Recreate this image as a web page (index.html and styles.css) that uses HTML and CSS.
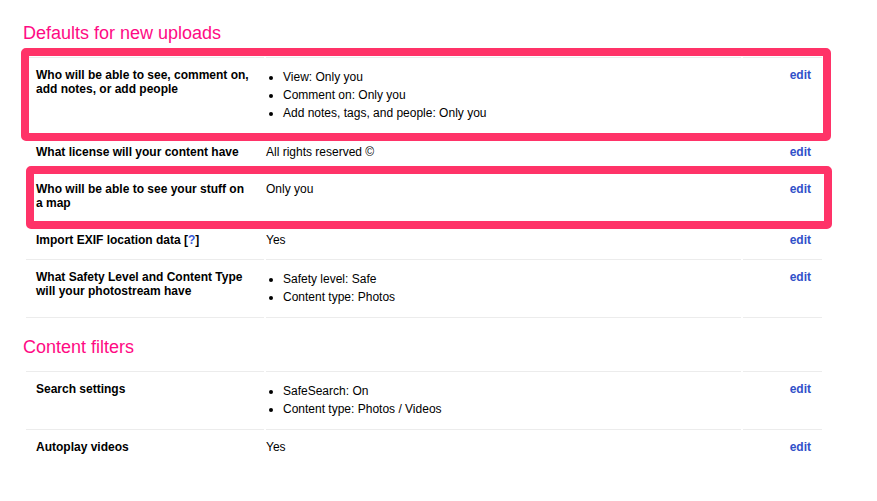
FILE: index.html
```html
<!DOCTYPE html>
<html>
<head>
<meta charset="utf-8">
<link rel="stylesheet" href="styles.css">
</head>
<body>
<div class="page">
  <section class="section first">
    <h2 class="heading">Defaults for new uploads</h2>
    <div class="grid">
      <div class="cell label tall">Who will be able to see, comment on, add notes, or add people</div>
      <div class="cell value tall"><ul class="list"><li>View: Only you</li><li>Comment on: Only you</li><li>Add notes, tags, and people: Only you</li></ul></div>
      <div class="cell action tall"><a class="edit">edit</a></div>

      <div class="cell label">What license will your content have</div>
      <div class="cell value">All rights reserved ©</div>
      <div class="cell action"><a class="edit">edit</a></div>

      <div class="cell label">Who will be able to see your stuff on a map</div>
      <div class="cell value">Only you</div>
      <div class="cell action"><a class="edit">edit</a></div>

      <div class="cell label">Import EXIF location data [<a class="help">?</a>]</div>
      <div class="cell value">Yes</div>
      <div class="cell action"><a class="edit">edit</a></div>

      <div class="cell label last">What Safety Level and Content Type will your photostream have</div>
      <div class="cell value last"><ul class="list"><li>Safety level: Safe</li><li>Content type: Photos</li></ul></div>
      <div class="cell action last"><a class="edit">edit</a></div>
    </div>
    <div class="highlight hl-one"></div>
    <div class="highlight hl-two"></div>
  </section>

  <section class="section">
    <h2 class="heading">Content filters</h2>
    <div class="grid">
      <div class="cell label">Search settings</div>
      <div class="cell value"><ul class="list"><li>SafeSearch: On</li><li>Content type: Photos / Videos</li></ul></div>
      <div class="cell action"><a class="edit">edit</a></div>

      <div class="cell label">Autoplay videos</div>
      <div class="cell value">Yes</div>
      <div class="cell action"><a class="edit">edit</a></div>
    </div>
  </section>
</div>
</body>
</html>
```

FILE: styles.css
```css
html, body {
  margin: 0;
  padding: 0;
  background: #ffffff;
}

body {
  font-family: "Liberation Sans", Arial, Helvetica, sans-serif;
  font-size: 12px;
  color: #000;
}

.page {
  padding: 23px 0 0 26px;
  width: 796px;
}

.section {
  position: relative;
}

.section + .section {
  margin-top: 19px;
}

.heading {
  margin: 0 0 13px -3px;
  font-size: 18px;
  line-height: 21px;
  font-weight: normal;
  color: #ff0a84;
}

.grid {
  display: grid;
  grid-template-columns: 238px 475px 79px;
  column-gap: 2px;
}

.cell {
  border-top: 1px solid #ececec;
  padding: 10px 0 12px;
  line-height: 14px;
}

.cell.tall {
  padding-bottom: 13px;
}

.cell.last {
  border-bottom: 1px solid #ececec;
}

.label {
  padding-left: 10px;
  padding-right: 13px;
  font-weight: bold;
}

.action {
  text-align: right;
  padding-right: 11px;
}

.edit {
  color: #3150c9;
  font-weight: bold;
  cursor: pointer;
}

.help {
  color: #3a5ad8;
  cursor: pointer;
}

.list {
  margin: 0 0 -1px;
  padding: 0 0 0 17px;
  line-height: 18px;
}

.highlight {
  position: absolute;
  border: 8px solid #ff3368;
  border-radius: 5px;
  box-sizing: border-box;
  pointer-events: none;
}

.hl-one {
  left: -5px;
  top: 25px;
  width: 810px;
  height: 93px;
}

.hl-two {
  left: 0;
  top: 143px;
  width: 806px;
  height: 63px;
}
```
